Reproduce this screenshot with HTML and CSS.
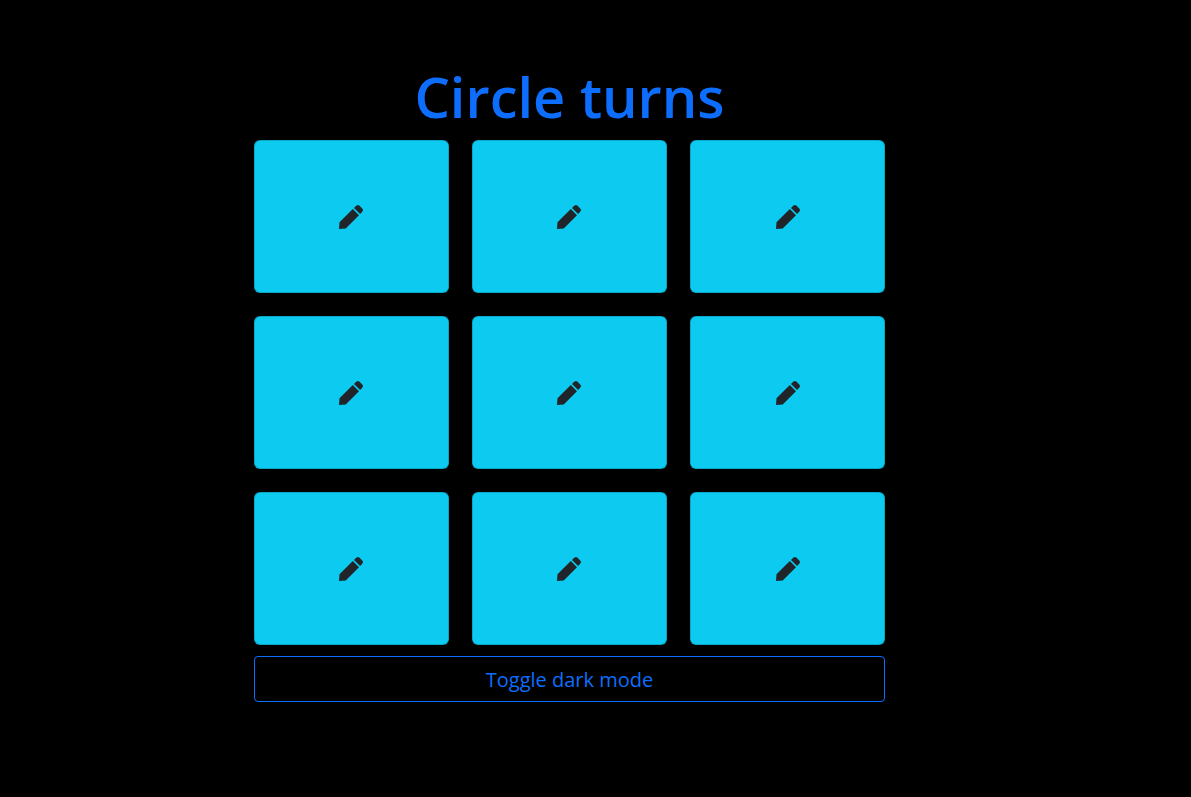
FILE: index.html
```html
<!DOCTYPE html>
<html lang="en">
<head>
<meta charset="utf-8">
<meta name="viewport" content="width=device-width, initial-scale=1">
<title>Tic tac toe</title>
<link rel="stylesheet" href="styles.css">
</head>
<body>
<svg class="sprite" aria-hidden="true">
  <symbol id="pencil" viewBox="0 0 24 24">
    <path d="M0 24L.5 17.300 13.800 4l6.200 6.200L6.700 23.500zM15 2.900l2.200-2.100q1.700-1.600 3.400 0l2.600 2.600q1.600 1.700 0 3.400l-2.100 2.200z"/>
  </symbol>
</svg>
<main class="game">
  <h1 class="title">Circle turns</h1>
  <div class="board">
    <button class="cell" type="button" aria-label="Cell 1"><svg class="icon"><use href="#pencil"/></svg></button>
    <button class="cell" type="button" aria-label="Cell 2"><svg class="icon"><use href="#pencil"/></svg></button>
    <button class="cell" type="button" aria-label="Cell 3"><svg class="icon"><use href="#pencil"/></svg></button>
    <button class="cell" type="button" aria-label="Cell 4"><svg class="icon"><use href="#pencil"/></svg></button>
    <button class="cell" type="button" aria-label="Cell 5"><svg class="icon"><use href="#pencil"/></svg></button>
    <button class="cell" type="button" aria-label="Cell 6"><svg class="icon"><use href="#pencil"/></svg></button>
    <button class="cell" type="button" aria-label="Cell 7"><svg class="icon"><use href="#pencil"/></svg></button>
    <button class="cell" type="button" aria-label="Cell 8"><svg class="icon"><use href="#pencil"/></svg></button>
    <button class="cell" type="button" aria-label="Cell 9"><svg class="icon"><use href="#pencil"/></svg></button>
  </div>
  <button class="toggle" type="button">Toggle dark mode</button>
</main>
</body>
</html>
```
FILE: styles.css
```css
* {
  box-sizing: border-box;
}

body {
  margin: 0;
  padding: 60px 52px 60px 0;
  background: #000;
  font-family: "Segoe UI", "Open Sans", "Noto Sans", sans-serif;
}

.sprite {
  display: none;
}

.game {
  width: 53vw;
  margin: 0 auto;
}

.title {
  margin: 0 0 8px;
  color: #0d6efd;
  font-size: 56px;
  font-weight: 600;
  line-height: 72px;
  text-align: center;
}

.board {
  display: grid;
  grid-template-columns: repeat(3, 1fr);
  gap: 23px;
}

.cell {
  display: flex;
  align-items: center;
  justify-content: center;
  padding: 64px 12px 63px;
  border: 1px solid rgba(0, 0, 0, 0.176);
  border-radius: 6px;
  background: #0dcaf0;
  color: #212529;
  cursor: pointer;
}

.icon {
  width: 24px;
  height: 24px;
  fill: currentColor;
}

.toggle {
  display: block;
  width: 100%;
  margin-top: 11px;
  padding: 9px 16px 7px;
  border: 1px solid #0d6efd;
  border-radius: 4px;
  background: transparent;
  color: #0d6efd;
  font-family: inherit;
  font-size: 20px;
  line-height: 28px;
  cursor: pointer;
}
```
